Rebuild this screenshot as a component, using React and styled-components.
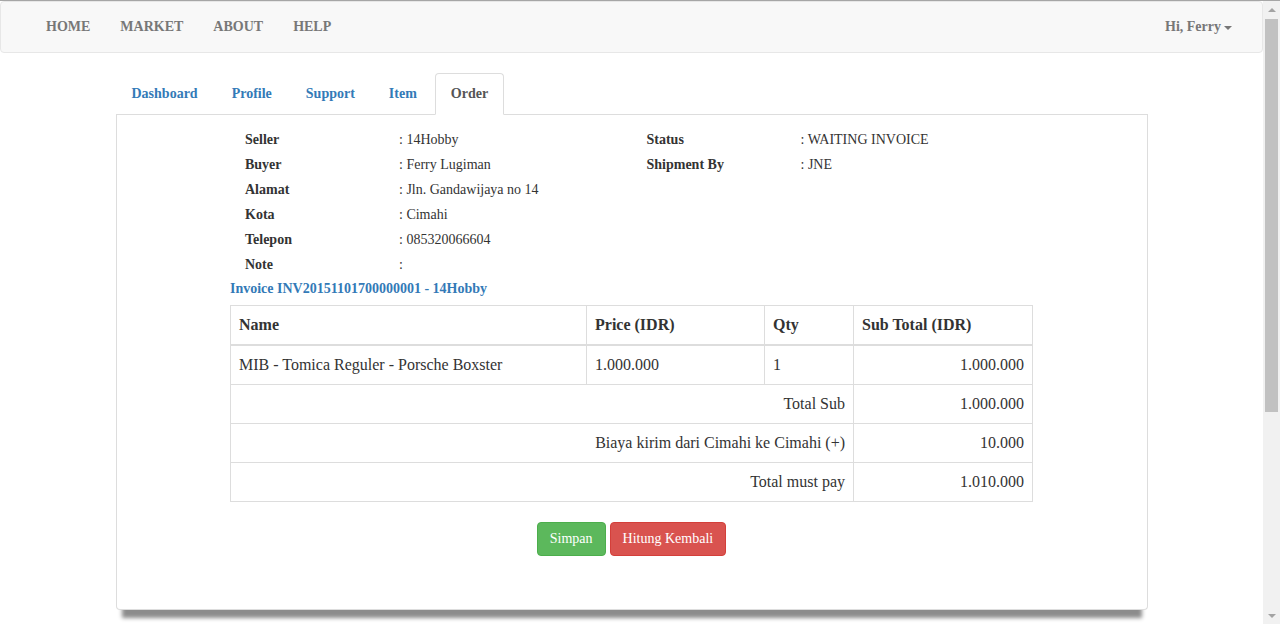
import React from "react";
import styled, { createGlobalStyle } from "styled-components";

const Global = createGlobalStyle`
  html, body { margin: 0; padding: 0; background: #fff; }
  body {
    font-family: "Liberation Serif", "Times New Roman", serif;
    font-size: 14px;
    line-height: 20px;
    color: #333;
  }
  * { box-sizing: border-box; }
`;

const Frame = styled.div`
  height: 624px;
  border-top: 1px solid #a6a6a6;
  display: flex;
  overflow: hidden;
`;

const Page = styled.div`
  flex: 1;
  min-width: 0;
  display: flex;
  flex-direction: column;
`;

const Navbar = styled.nav`
  height: 52px;
  background: #f8f8f8;
  border: 1px solid #e7e7e7;
  border-radius: 4px;
  display: flex;
  align-items: center;
  justify-content: space-between;
  padding: 0 15px 0 30px;
  margin-bottom: 20px;
`;

const NavList = styled.ul`
  list-style: none;
  margin: 0;
  padding: 0;
  display: flex;
`;

const NavLink = styled.a`
  display: flex;
  align-items: center;
  padding: 15px;
  font-weight: bold;
  color: #777;
  text-decoration: none;
  cursor: pointer;
`;

const Caret = styled.span`
  display: inline-block;
  width: 0;
  height: 0;
  margin-left: 3px;
  margin-top: 2px;
  border-top: 4px solid #777;
  border-left: 4px solid transparent;
  border-right: 4px solid transparent;
`;

const Container = styled.div`
  width: 1032px;
  margin: 0 auto;
`;

const Tabs = styled.ul`
  list-style: none;
  margin: 0;
  padding: 0;
  display: flex;
  border-bottom: 1px solid #ddd;
`;

const Tab = styled.li`
  margin-bottom: -1px;
  margin-right: 2px;
`;

const TabLink = styled.a`
  display: block;
  padding: 10px 15px;
  line-height: 20px;
  font-weight: bold;
  text-decoration: none;
  cursor: pointer;
  border: 1px solid ${(p) => (p.$active ? "#ddd" : "transparent")};
  border-bottom-color: ${(p) => (p.$active ? "#fff" : "transparent")};
  border-radius: 4px 4px 0 0;
  background: ${(p) => (p.$active ? "#fff" : "transparent")};
  color: ${(p) => (p.$active ? "#555" : "#337ab7")};
`;

const Panel = styled.div`
  border: 1px solid #ddd;
  border-top: none;
  border-radius: 0 0 4px 4px;
  background: #fff;
  padding: 12px 0 53px;
  box-shadow: 0 14px 4px -6px rgba(0, 0, 0, 0.45);
`;

const Invoice = styled.div`
  width: 803px;
  margin: 0 auto;
`;

const InfoGrid = styled.div`
  display: grid;
  grid-template-columns: 1fr 1fr;
`;

const InfoCol = styled.div`
  padding-left: 15px;
`;

const InfoRow = styled.div`
  display: flex;
  height: 25px;
  align-items: center;
`;

const Label = styled.span`
  width: 154px;
  flex: none;
  font-weight: bold;
`;

const Value = styled.span``;

const InvoiceTitle = styled.div`
  margin-top: 2px;
  line-height: 20px;
  font-weight: bold;
  color: #337ab7;
`;

const Table = styled.table`
  width: 100%;
  margin-top: 6px;
  border-collapse: collapse;
  border: 1px solid #ddd;
  font-size: 16px;
  line-height: 22px;
`;

const Th = styled.th`
  padding: 8px;
  text-align: left;
  font-weight: bold;
  border: 1px solid #ddd;
  border-bottom: 2px solid #ddd;
  width: ${(p) => p.$w || "auto"};
`;

const Td = styled.td`
  padding: 8px;
  border: 1px solid #ddd;
  text-align: ${(p) => (p.$right ? "right" : "left")};
`;

const Actions = styled.div`
  display: flex;
  justify-content: center;
  gap: 4px;
  margin-top: 20px;
`;

const Button = styled.button`
  font-family: "Liberation Serif", "Times New Roman", serif;
  font-size: 14px;
  line-height: 20px;
  padding: 6px 12px;
  border-radius: 4px;
  color: #fff;
  cursor: pointer;
  border: 1px solid ${(p) => (p.$variant === "danger" ? "#d43f3a" : "#4cae4c")};
  background: ${(p) => (p.$variant === "danger" ? "#d9534f" : "#5cb85c")};
`;

const ScrollTrack = styled.div`
  width: 17px;
  flex: none;
  background: #f1f1f1;
  display: flex;
  flex-direction: column;
`;

const ScrollArrow = styled.div`
  height: 17px;
  flex: none;
  display: flex;
  align-items: center;
  justify-content: center;
`;

const ArrowGlyph = styled.span`
  width: 0;
  height: 0;
  border-left: 4px solid transparent;
  border-right: 4px solid transparent;
  ${(p) =>
    p.$down
      ? "border-top: 4px solid #a3a3a3;"
      : "border-bottom: 4px solid #a3a3a3;"}
`;

const ScrollBody = styled.div`
  flex: 1;
  padding: 1px 2px 0;
`;

const Thumb = styled.div`
  height: 393px;
  background: #c1c1c1;
`;

const left = [
  ["Seller", ": 14Hobby"],
  ["Buyer", ": Ferry Lugiman"],
  ["Alamat", ": Jln. Gandawijaya no 14"],
  ["Kota", ": Cimahi"],
  ["Telepon", ": 085320066604"],
  ["Note", ":"],
];
const right = [
  ["Status", ": WAITING INVOICE"],
  ["Shipment By", ": JNE"],
];

export default function App() {
  return (
    <>
      <Global />
      <Frame>
        <Page>
          <Navbar>
            <NavList>
              {["HOME", "MARKET", "ABOUT", "HELP"].map((t) => (
                <li key={t}>
                  <NavLink>{t}</NavLink>
                </li>
              ))}
            </NavList>
            <NavList>
              <li>
                <NavLink>
                  Hi, Ferry<Caret />
                </NavLink>
              </li>
            </NavList>
          </Navbar>
          <Container>
            <Tabs>
              {["Dashboard", "Profile", "Support", "Item", "Order"].map((t) => (
                <Tab key={t}>
                  <TabLink $active={t === "Order"}>{t}</TabLink>
                </Tab>
              ))}
            </Tabs>
            <Panel>
              <Invoice>
                <InfoGrid>
                  <InfoCol>
                    {left.map(([l, v]) => (
                      <InfoRow key={l}>
                        <Label>{l}</Label>
                        <Value>{v}</Value>
                      </InfoRow>
                    ))}
                  </InfoCol>
                  <InfoCol>
                    {right.map(([l, v]) => (
                      <InfoRow key={l}>
                        <Label>{l}</Label>
                        <Value>{v}</Value>
                      </InfoRow>
                    ))}
                  </InfoCol>
                </InfoGrid>
                <InvoiceTitle>Invoice INV20151101700000001 - 14Hobby</InvoiceTitle>
                <Table>
                  <thead>
                    <tr>
                      <Th $w="356px">Name</Th>
                      <Th $w="178px">Price (IDR)</Th>
                      <Th $w="89px">Qty</Th>
                      <Th>Sub Total (IDR)</Th>
                    </tr>
                  </thead>
                  <tbody>
                    <tr>
                      <Td>MIB - Tomica Reguler - Porsche Boxster</Td>
                      <Td>1.000.000</Td>
                      <Td>1</Td>
                      <Td $right>1.000.000</Td>
                    </tr>
                    <tr>
                      <Td colSpan={3} $right>Total Sub</Td>
                      <Td $right>1.000.000</Td>
                    </tr>
                    <tr>
                      <Td colSpan={3} $right>Biaya kirim dari Cimahi ke Cimahi (+)</Td>
                      <Td $right>10.000</Td>
                    </tr>
                    <tr>
                      <Td colSpan={3} $right>Total must pay</Td>
                      <Td $right>1.010.000</Td>
                    </tr>
                  </tbody>
                </Table>
              </Invoice>
              <Actions>
                <Button $variant="success">Simpan</Button>
                <Button $variant="danger">Hitung Kembali</Button>
              </Actions>
            </Panel>
          </Container>
        </Page>
        <ScrollTrack>
          <ScrollArrow>
            <ArrowGlyph />
          </ScrollArrow>
          <ScrollBody>
            <Thumb />
          </ScrollBody>
          <ScrollArrow>
            <ArrowGlyph $down />
          </ScrollArrow>
        </ScrollTrack>
      </Frame>
    </>
  );
}
